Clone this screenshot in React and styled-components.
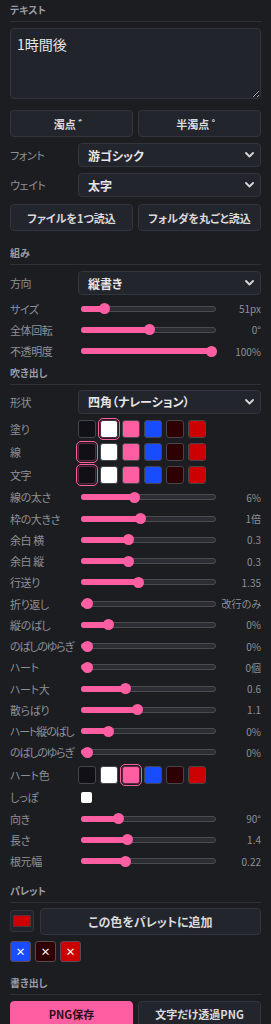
import styled, { createGlobalStyle } from "styled-components"

const PINK = "#ff5fa2"
const COLORS = ["#101016", "#ffffff", PINK, "#1a4cff", "#2e0004", "#cc0000"]

const Global = createGlobalStyle`
body {
    margin: 0;
    background: #1c1d21;
    font-family: "Noto Sans CJK JP", "Noto Sans", sans-serif;
    font-feature-settings: "palt";
}
`

const Panel = styled.div`
width: 271px;
box-sizing: border-box;
padding: 3px 10px 0 10px;
display: flex;
flex-direction: column;
`
const Title = styled.div`
margin-top: ${props => props.top || 0}px;
font-size: 10px;
line-height: 14px;
font-weight: 700;
color: #9a9ca4;
padding-bottom: 4px;
border-bottom: 1px solid #2f3137;
`
const TextArea = styled.textarea`
margin-top: 6px;
height: 71px;
box-sizing: border-box;
background: #22242b;
border: 1px solid #33353c;
border-radius: 4px;
color: #e6e6e8;
font-family: inherit;
font-size: 14px;
padding: 5px 6px;
resize: vertical;
outline: none;
`
const Pair = styled.div`
margin-top: ${props => props.top}px;
display: grid;
grid-template-columns: 1fr 1fr;
gap: 5px;
`
const Button = styled.button`
height: 27px;
box-sizing: border-box;
background: ${props => props.primary ? PINK : "#23252c"};
border: 1px solid ${props => props.primary ? PINK : "#33353c"};
border-radius: 4px;
color: ${props => props.primary ? "#2a0f1c" : "#dadadc"};
font-family: inherit;
font-feature-settings: "palt";
font-size: 11px;
font-weight: 700;
padding: 0;
`
const Row = styled.div`
margin-top: ${props => props.top || 0}px;
height: ${props => props.h}px;
display: grid;
grid-template-columns: 68px 1fr ${props => props.value ? "45px" : ""};
align-items: center;
`
const Label = styled.span`
font-size: 11px;
letter-spacing: ${props => props.narrow ? "-1.2px" : "-0.4px"};
color: #8e9098;
white-space: nowrap;
`
const Select = styled.div`
height: 24px;
box-sizing: border-box;
background: #23252c;
border: 1px solid #33353c;
border-radius: 4px;
padding: 0 6px 0 9px;
display: flex;
align-items: center;
justify-content: space-between;
font-size: 12px;
font-weight: 700;
color: #e6e6e8;
`
const Track = styled.div`
position: relative;
margin-left: 3px;
height: 6px;
box-sizing: border-box;
border: 1px solid #4a4c52;
background: #2b2d33;
border-radius: 3px;
`
const Fill = styled.div`
position: absolute;
left: -1px;
top: -1px;
height: 6px;
background: ${PINK};
border-radius: 3px;
`
const Thumb = styled.div`
position: absolute;
top: -3.5px;
width: 11px;
height: 11px;
margin-left: -5.5px;
border-radius: 50%;
background: ${PINK};
`
const Value = styled.span`
text-align: right;
font-size: 10px;
color: #8e9098;
white-space: nowrap;
`
const Swatches = styled.div`
display: flex;
gap: 4px;
`
const Swatch = styled.div`
width: 18px;
height: 18px;
box-sizing: border-box;
border-radius: 3px;
background: ${props => props.color};
border: 1px solid ${props => props.selected ? "#5a2a40" : "#44464c"};
outline: ${props => props.selected ? `1.5px solid ${PINK}` : "none"};
outline-offset: 1px;
`
const Check = styled.div`
margin-left: 3px;
width: 11px;
height: 11px;
border-radius: 2px;
background: #ffffff;
`
const PaletteRow = styled.div`
margin-top: 5px;
display: flex;
align-items: center;
gap: 6px;
`
const ColorBox = styled.div`
width: 24px;
height: 22px;
box-sizing: border-box;
border: 1px solid #33353c;
border-radius: 3px;
background: #22242b;
padding: 4px 2px;
display: flex;
`
const ColorInner = styled.div`
flex: 1;
background: ${props => props.color};
border: 1px solid #55303a;
`
const Chips = styled.div`
margin-top: 6px;
display: flex;
gap: 4px;
`
const Chip = styled.div`
width: 21px;
height: 21px;
box-sizing: border-box;
border-radius: 3px;
border: 1px solid #5a4a50;
background: ${props => props.color};
color: #ffffff;
font-size: 10px;
font-weight: 700;
display: flex;
align-items: center;
justify-content: center;
`

function Chevron() {
    return (
        <svg width="9" height="6" viewBox="0 0 9 6">
            <path d="M1 1 L4.5 4.5 L8 1" stroke="#d8d8da" strokeWidth="1.8" fill="none" strokeLinecap="round" strokeLinejoin="round" />
        </svg>
    )
}

function SelectRow({ label, text, top }) {
    return (
        <Row top={top} h={24}>
            <Label>{label}</Label>
            <Select>{text}<Chevron /></Select>
        </Row>
    )
}

function Slider({ label, pct, value }) {
    return (
        <Row h={21.25} value>
            <Label narrow={label.length > 6}>{label}</Label>
            <Track>
                <Fill style={{ width: `calc(${pct} * 124px + 6.5px)` }} />
                <Thumb style={{ left: `calc(${pct} * 124px + 5.5px)` }} />
            </Track>
            <Value>{value}</Value>
        </Row>
    )
}

function SwatchRow({ label, selected, top }) {
    return (
        <Row h={23} top={top}>
            <Label>{label}</Label>
            <Swatches>
                {COLORS.map((c, i) => <Swatch key={i} color={c} selected={i === selected} />)}
            </Swatches>
        </Row>
    )
}

const kumi = [
    ["サイズ", 0.14, "51px"],
    ["全体回転", 0.5, "0°"],
    ["不透明度", 1, "100%"],
]
const fukidashi = [
    ["線の太さ", 0.38, "6%"],
    ["枠の大きさ", 0.43, "1倍"],
    ["余白 横", 0.33, "0.3"],
    ["余白 縦", 0.33, "0.3"],
    ["行送り", 0.41, "1.35"],
    ["折り返し", 0, "改行のみ"],
    ["縦のばし", 0.17, "0%"],
    ["のばしのゆらぎ", 0, "0%"],
    ["ハート", 0, "0個"],
    ["ハート大", 0.31, "0.6"],
    ["散らばり", 0.4, "1.1"],
    ["ハート縦のばし", 0.17, "0%"],
    ["のばしのゆらぎ", 0, "0%"],
]
const shippo = [
    ["向き", 0.25, "90°"],
    ["長さ", 0.32, "1.4"],
    ["根元幅", 0.31, "0.22"],
]

export default function App() {
    return (
        <>
            <Global />
            <Panel>
                <Title>テキスト</Title>
                <TextArea defaultValue="1時間後" />
                <Pair top={11}>
                    <Button>濁点 ゛</Button>
                    <Button>半濁点 ゜</Button>
                </Pair>
                <SelectRow top={6} label="フォント" text="游ゴシック" />
                <SelectRow top={6} label="ウェイト" text="太字" />
                <Pair top={7}>
                    <Button>ファイルを1つ読込</Button>
                    <Button>フォルダを丸ごと読込</Button>
                </Pair>

                <Title top={15}>組み</Title>
                <SelectRow top={6} label="方向" text="縦書き" />
                <div style={{ height: 3 }} />
                {kumi.map(([l, p, v], i) => <Slider key={i} label={l} pct={p} value={v} />)}

                <Title top={4}>吹き出し</Title>
                <SelectRow top={5} label="形状" text="四角（ナレーション）" />
                <SwatchRow top={4} label="塗り" selected={1} />
                <SwatchRow label="線" selected={0} />
                <SwatchRow label="文字" selected={0} />
                {fukidashi.map(([l, p, v], i) => <Slider key={i} label={l} pct={p} value={v} />)}
                <SwatchRow label="ハート色" selected={2} />
                <Row h={22}>
                    <Label>しっぽ</Label>
                    <Check />
                </Row>
                {shippo.map(([l, p, v], i) => <Slider key={i} label={l} pct={p} value={v} />)}

                <Title top={12}>パレット</Title>
                <PaletteRow>
                    <ColorBox><ColorInner color="#cc0000" /></ColorBox>
                    <Button style={{ flex: 1, fontSize: 12 }}>この色をパレットに追加</Button>
                </PaletteRow>
                <Chips>
                    <Chip color="#1a4cff">×</Chip>
                    <Chip color="#2e0004">×</Chip>
                    <Chip color="#cc0000">×</Chip>
                </Chips>

                <Title top={14}>書き出し</Title>
                <Pair top={6}>
                    <Button primary>PNG保存</Button>
                    <Button>文字だけ透過PNG</Button>
                </Pair>
            </Panel>
        </>
    )
}
